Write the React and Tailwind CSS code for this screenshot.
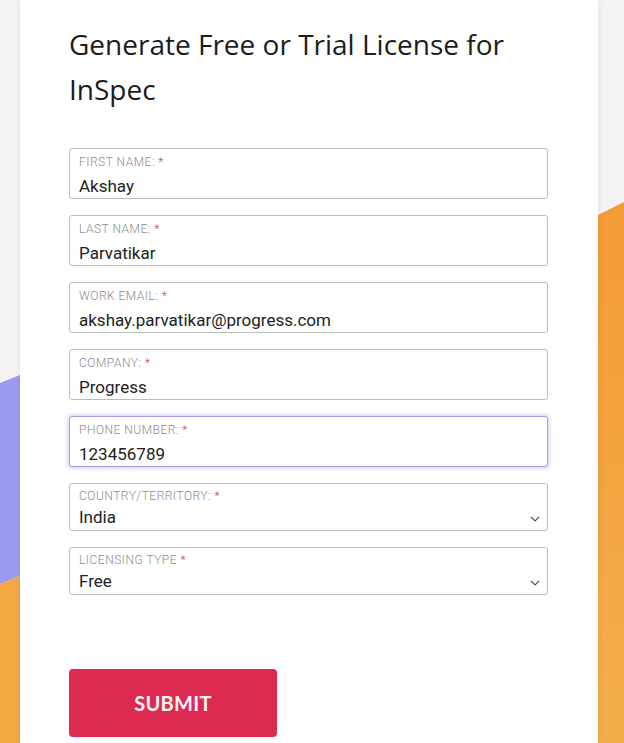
import React from 'react';

const fields = [
  { label: 'FIRST NAME:', value: 'Akshay' },
  { label: 'LAST NAME:', value: 'Parvatikar' },
  { label: 'WORK EMAIL:', value: 'akshay.parvatikar@progress.com' },
  { label: 'COMPANY:', value: 'Progress' },
  { label: 'PHONE NUMBER:', value: '123456789', focused: true },
  { label: 'COUNTRY/TERRITORY:', value: 'India', select: true },
  { label: 'LICENSING TYPE', value: 'Free', select: true },
];

function Chevron() {
  return (
    <svg width="10" height="6" viewBox="0 0 10 6" className="absolute right-[7px] bottom-[8px]">
      <path d="M1 1l4 4 4-4" fill="none" stroke="#555" strokeWidth="1.2" />
    </svg>
  );
}

function Field({ label, value, focused, select }) {
  return (
    <div
      className={`relative rounded-[3px] border bg-white px-[9px] ${select ? 'h-[48px] pt-[5px]' : 'h-[51px] pt-[6px]'} ${
        focused ? 'border-[#a29ee8] shadow-[0_0_4px_1px_rgba(160,150,240,0.5)]' : 'border-[#bdbdbd]'
      }`}
    >
      <div className="text-[12px] leading-[14px] text-[#8d8d8d] tracking-[0.5px] font-light">
        {label} <span className="text-[#d0406a]">*</span>
      </div>
      <div className={`text-[17px] leading-[20px] text-[#222] ${select ? 'mt-[4px]' : 'mt-[7px]'}`}>{value}</div>
      {select && <Chevron />}
    </div>
  );
}

export default function App() {
  return (
    <div className="relative h-[743px] w-[624px] overflow-hidden bg-[#f5f2f3]" style={{ fontFamily: 'Roboto, "Liberation Sans", sans-serif' }}>
      <svg className="absolute inset-0" width="624" height="743" viewBox="0 0 624 743">
        <defs>
          <linearGradient id="org" x1="0" y1="0" x2="0" y2="1">
            <stop offset="0" stopColor="#f39b37" />
            <stop offset="1" stopColor="#f3ae4c" />
          </linearGradient>
        </defs>
        <polygon points="0,383 40,367 40,568 0,584" fill="#9d9bf1" />
        <polygon points="0,584 40,568 40,743 0,743" fill="#f3a844" />
        <polygon points="580,224 624,202 624,743 580,743" fill="url(#org)" />
      </svg>

      <div className="relative ml-[20px] h-full w-[578px] bg-white shadow-[0_0_6px_rgba(0,0,0,0.08)] pl-[49px] pr-[30px] pt-[22px]">
        <h1
          className="text-[28px] font-medium leading-[45px] text-[#1c1c1c]"
          style={{ fontFamily: '"Open Sans", Lato, sans-serif' }}
        >
          Generate Free or Trial License for
          <br />
          InSpec
        </h1>

        <div className="mt-[36px] flex w-[479px] flex-col gap-[16px]">
          {fields.map(f => (
            <Field key={f.label} {...f} />
          ))}
        </div>

        <button
          className="mt-[74px] flex h-[68px] w-[208px] items-center justify-center rounded-[4px] bg-[#dc2a50] text-[20px] font-bold tracking-[0.3px] text-[#fff3f5]"
          style={{ fontFamily: 'Lato, "Open Sans", sans-serif' }}
        >
          SUBMIT
        </button>
      </div>
    </div>
  );
}
